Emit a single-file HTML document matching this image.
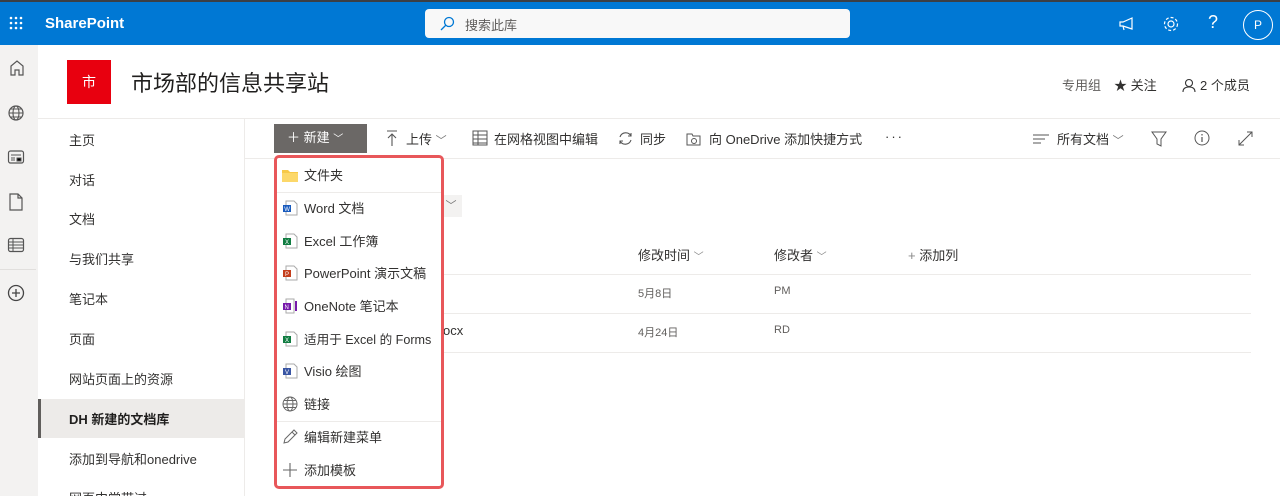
<!DOCTYPE html>
<html><head><meta charset="utf-8"><style>
*{box-sizing:border-box;margin:0;padding:0}
html,body{width:1280px;height:496px;overflow:hidden}
body{background:#fff;font-family:"Liberation Sans","Noto Sans CJK SC",sans-serif;color:#323130;position:relative}
.abs{position:absolute}
.top{left:0;top:0;width:1280px;height:45px;background:#0078d4;border-top:2px solid #3b3f45}
.rail{left:0;top:45px;width:38px;height:451px;background:#f3f2f1}
.nav a{position:absolute;left:69px;font-size:13px;color:#323130;text-decoration:none}
.cmd{font-size:13px;color:#323130;top:129px}
.mi{position:absolute;left:27px;font-size:13px;color:#323130;white-space:nowrap}
.ic{position:absolute;left:5px;width:16px;height:16px}
</style></head><body>
<div class="abs top">
  <svg class="abs" style="left:9px;top:14px" width="14" height="14"><g fill="#fff"><circle cx="2" cy="2" r="1.3"/><circle cx="7" cy="2" r="1.3"/><circle cx="12" cy="2" r="1.3"/><circle cx="2" cy="7" r="1.3"/><circle cx="7" cy="7" r="1.3"/><circle cx="12" cy="7" r="1.3"/><circle cx="2" cy="12" r="1.3"/><circle cx="7" cy="12" r="1.3"/><circle cx="12" cy="12" r="1.3"/></g></svg>
  <div class="abs" style="left:45px;top:13px;color:#fff;font-size:15px;font-weight:bold">SharePoint</div>
  <div class="abs" style="left:425px;top:7px;width:425px;height:29px;background:#f8f8f8;border-radius:4px">
    <svg class="abs" style="left:14px;top:7px" width="16" height="16"><circle cx="10" cy="6" r="4.5" fill="none" stroke="#0078d4" stroke-width="1.3"/><path d="M7 9L2 14" stroke="#0078d4" stroke-width="1.3"/></svg>
    <div class="abs" style="left:40px;top:6px;font-size:13px;color:#605e5c">搜索此库</div>
  </div>
  <svg class="abs" style="left:1118px;top:14px" width="18" height="16"><path d="M2 6h3l9-4v11l-9-3H2z M5 10l1 4" fill="none" stroke="#fff" stroke-width="1.2"/></svg>
  <svg class="abs" style="left:1162px;top:13px" width="18" height="18"><circle cx="9" cy="9" r="3" fill="none" stroke="#fff" stroke-width="1.2"/><circle cx="9" cy="9" r="6.5" fill="none" stroke="#fff" stroke-width="1.2" stroke-dasharray="3 2"/></svg>
  <div class="abs" style="left:1208px;top:10px;color:#fff;font-size:18px">?</div>
  <div class="abs" style="left:1243px;top:8px;width:30px;height:30px;border:1.3px solid #fff;border-radius:50%;color:#fff;font-size:12px;text-align:center;line-height:28px">P</div>
</div>
<div class="abs rail">
  <svg class="abs" style="left:8px;top:14px" width="18" height="18"><path d="M3 16V7l6-5 6 5v9h-4v-5H7v5z" fill="none" stroke="#555" stroke-width="1.2"/></svg>
  <svg class="abs" style="left:7px;top:59px" width="18" height="18"><circle cx="9" cy="9" r="7" fill="none" stroke="#555" stroke-width="1.2"/><ellipse cx="9" cy="9" rx="3" ry="7" fill="none" stroke="#555" stroke-width="1.1"/><path d="M2 9h14M3 5h12M3 13h12" stroke="#555" stroke-width="1"/></svg>
  <svg class="abs" style="left:7px;top:104px" width="18" height="16"><rect x="1.5" y="2" width="15" height="12" rx="2" fill="none" stroke="#555" stroke-width="1.2"/><path d="M4 6h10M4 9h4M4 11h4M10 9h4v3h-4z" stroke="#555" stroke-width="1"/></svg>
  <svg class="abs" style="left:9px;top:148px" width="14" height="18"><path d="M1 1h8l4 4v12H1z M9 1v4h4" fill="none" stroke="#555" stroke-width="1.2"/></svg>
  <svg class="abs" style="left:7px;top:192px" width="18" height="16"><rect x="1.5" y="1.5" width="15" height="13" rx="2" fill="none" stroke="#555" stroke-width="1.2"/><path d="M2 5h14M2 8h14M2 11h14M6 2v12" stroke="#555" stroke-width="1"/></svg>
  <div class="abs" style="left:0;top:224px;width:36px;height:1px;background:#e1dfdd"></div>
  <svg class="abs" style="left:6px;top:238px" width="20" height="20"><circle cx="10" cy="10" r="7.5" fill="none" stroke="#444" stroke-width="1.3"/><path d="M10 6v8M6 10h8" stroke="#444" stroke-width="1.3"/></svg>
</div>
<div class="abs" style="left:67px;top:60px;width:44px;height:44px;background:#e8000f;color:#fff;font-size:14px;text-align:center;line-height:44px">市</div>
<div class="abs" style="left:131px;top:66px;font-size:22px;color:#201f1e">市场部的信息共享站</div>
<div class="abs" style="left:1062px;top:75px;font-size:13px;color:#605e5c">专用组</div>
<div class="abs" style="left:1114px;top:75px;font-size:13px;color:#323130">★ 关注</div>
<svg class="abs" style="left:1182px;top:78px" width="14" height="15"><circle cx="7" cy="5" r="3.5" fill="none" stroke="#333" stroke-width="1.1"/><path d="M1 14c0-4 3-5 6-5s6 1 6 5" fill="none" stroke="#333" stroke-width="1.1"/></svg>
<div class="abs" style="left:1200px;top:75px;font-size:13px;color:#323130">2 个成员</div>
<div class="abs" style="left:38px;top:118px;width:1242px;height:1px;background:#edebe9"></div>
<div class="abs" style="left:244px;top:119px;width:1px;height:377px;background:#edebe9"></div>
<div class="abs" style="left:245px;top:158px;width:1035px;height:1px;background:#edebe9"></div>
<div class="nav">
  <a style="top:130px">主页</a><a style="top:170px">对话</a><a style="top:209px">文档</a><a style="top:249px">与我们共享</a><a style="top:289px">笔记本</a><a style="top:329px">页面</a><a style="top:369px">网站页面上的资源</a>
  <div class="abs" style="left:38px;top:399px;width:206px;height:39px;background:#edebe9;border-left:3px solid #605e5c"></div>
  <a style="top:409px;font-weight:bold;color:#201f1e">DH 新建的文档库</a>
  <a style="top:449px">添加到导航和onedrive</a><a style="top:488px">网页中常带过</a>
</div>
<div class="abs" style="left:274px;top:124px;width:93px;height:29px;background:#6b6866;color:#fff;font-size:13px;line-height:28px;padding-left:13px">＋ 新建 <span style="font-size:10px">﹀</span></div>
<svg class="abs" style="left:386px;top:130px" width="12" height="17"><path d="M1 1h10M6 4v12M2 8l4-4 4 4" fill="none" stroke="#555" stroke-width="1.1"/></svg>
<div class="abs cmd" style="left:406px">上传 <span style="color:#777;font-size:11px">﹀</span></div>
<svg class="abs" style="left:472px;top:130px" width="16" height="16"><rect x="1" y="1" width="14" height="14" fill="none" stroke="#555"/><path d="M1 5h14M1 9h14M1 13h14M6 1v14" stroke="#555"/></svg>
<div class="abs cmd" style="left:494px">在网格视图中编辑</div>
<svg class="abs" style="left:617px;top:130px" width="17" height="17"><path d="M3 7a6 6 0 0 1 11-1M14 10a6 6 0 0 1-11 1M14 3v3h-3M3 14v-3h3" fill="none" stroke="#555" stroke-width="1.1"/></svg>
<div class="abs cmd" style="left:640px">同步</div>
<svg class="abs" style="left:686px;top:131px" width="16" height="16"><path d="M1 3h5l1 2h7v9H1z" fill="none" stroke="#555"/><circle cx="8" cy="10" r="2.5" fill="none" stroke="#555"/></svg>
<div class="abs cmd" style="left:709px">向 OneDrive 添加快捷方式</div>
<div class="abs cmd" style="left:885px;letter-spacing:2px">···</div>
<svg class="abs" style="left:1033px;top:133px" width="16" height="12"><path d="M0 2h16M0 6h12M0 10h8" stroke="#555"/></svg>
<div class="abs cmd" style="left:1057px">所有文档 <span style="color:#777;font-size:11px">﹀</span></div>
<svg class="abs" style="left:1151px;top:131px" width="16" height="16"><path d="M1 1h14l-5 7v7l-4-2V8z" fill="none" stroke="#555"/></svg>
<svg class="abs" style="left:1194px;top:130px" width="16" height="16"><circle cx="8" cy="8" r="7" fill="none" stroke="#555"/><path d="M8 7v5M8 4v1.5" stroke="#555" stroke-width="1.2"/></svg>
<svg class="abs" style="left:1238px;top:131px" width="15" height="15"><path d="M1 14L14 1M9 1h5v5M1 9v5h5" fill="none" stroke="#555"/></svg>
<div class="abs" style="left:440px;top:195px;width:22px;height:22px;background:#f3f2f1;font-size:11px;color:#777;text-align:center;line-height:22px">﹀</div>
<div class="abs" style="left:638px;top:245px;font-size:13px">修改时间 <span style="color:#888;font-size:10px">﹀</span></div>
<div class="abs" style="left:774px;top:245px;font-size:13px">修改者 <span style="color:#888;font-size:10px">﹀</span></div>
<div class="abs" style="left:908px;top:245px;font-size:13px"><span style="color:#888">+</span> 添加列</div>
<div class="abs" style="left:440px;top:274px;width:811px;height:1px;background:#edebe9"></div>
<div class="abs" style="left:440px;top:313px;width:811px;height:1px;background:#edebe9"></div>
<div class="abs" style="left:440px;top:352px;width:811px;height:1px;background:#edebe9"></div>
<div class="abs" style="left:638px;top:285px;font-size:11px;color:#605e5c">5月8日</div>
<div class="abs" style="left:774px;top:285px;font-size:11px;color:#605e5c">PM</div>
<div class="abs" style="left:638px;top:324px;font-size:11px;color:#605e5c">4月24日</div>
<div class="abs" style="left:774px;top:324px;font-size:11px;color:#605e5c">RD</div>
<div class="abs" style="left:443px;top:323px;font-size:13px">ocx</div>
<div class="abs" style="left:274px;top:155px;width:170px;height:334px;background:#fff;border:3px solid #e8575a;border-radius:5px">
  <div class="ic" style="top:10px"><svg width="16" height="14"><path d="M0 2h6l2 2h8v10H0z" fill="#f7c948"/><path d="M0 5h16v9H0z" fill="#fcd86a"/></svg></div>
  <div class="mi" style="top:7px">文件夹</div>
  <div class="abs" style="left:0;top:34px;width:164px;height:1px;background:#edebe9"></div>
  <div class="ic" style="top:42px"><svg width="16" height="16"><path d="M4 1h8l3 3v11H4z" fill="#fff" stroke="#aaa"/><rect x="1" y="5" width="8" height="7" fill="#185abd"/><text x="2.3" y="11" font-size="6" fill="#fff" font-family="Liberation Sans">W</text></svg></div>
  <div class="mi" style="top:40px">Word 文档</div>
  <div class="ic" style="top:75px"><svg width="16" height="16"><path d="M4 1h8l3 3v11H4z" fill="#fff" stroke="#aaa"/><rect x="1" y="5" width="8" height="7" fill="#107c41"/><text x="3" y="11" font-size="6" fill="#fff" font-family="Liberation Sans">X</text></svg></div>
  <div class="mi" style="top:73px">Excel 工作簿</div>
  <div class="ic" style="top:107px"><svg width="16" height="16"><path d="M4 1h8l3 3v11H4z" fill="#fff" stroke="#aaa"/><rect x="1" y="5" width="8" height="7" fill="#c43e1c"/><text x="3" y="11" font-size="6" fill="#fff" font-family="Liberation Sans">P</text></svg></div>
  <div class="mi" style="top:105px">PowerPoint 演示文稿</div>
  <div class="ic" style="top:140px"><svg width="16" height="16"><path d="M4 1h8v14H4z" fill="#fff" stroke="#aaa"/><rect x="1" y="5" width="8" height="7" fill="#7719aa"/><rect x="13" y="3" width="2" height="10" fill="#7719aa"/><text x="2.5" y="11" font-size="6" fill="#fff" font-family="Liberation Sans">N</text></svg></div>
  <div class="mi" style="top:138px">OneNote 笔记本</div>
  <div class="ic" style="top:173px"><svg width="16" height="16"><path d="M4 1h8l3 3v11H4z" fill="#fff" stroke="#aaa"/><rect x="1" y="5" width="8" height="7" fill="#107c41"/><text x="3" y="11" font-size="6" fill="#fff" font-family="Liberation Sans">X</text></svg></div>
  <div class="mi" style="top:171px;font-size:12.6px">适用于 Excel 的 Forms</div>
  <div class="ic" style="top:205px"><svg width="16" height="16"><path d="M4 1h8l3 3v11H4z" fill="#fff" stroke="#aaa"/><rect x="1" y="5" width="8" height="7" fill="#3955a3"/><text x="3" y="11" font-size="6" fill="#fff" font-family="Liberation Sans">V</text></svg></div>
  <div class="mi" style="top:203px">Visio 绘图</div>
  <div class="ic" style="top:238px"><svg width="16" height="16"><circle cx="8" cy="8" r="7" fill="none" stroke="#666"/><ellipse cx="8" cy="8" rx="3" ry="7" fill="none" stroke="#666"/><path d="M1 8h14M2 4.5h12M2 11.5h12" stroke="#666"/></svg></div>
  <div class="mi" style="top:236px">链接</div>
  <div class="abs" style="left:0;top:263px;width:164px;height:1px;background:#edebe9"></div>
  <div class="ic" style="top:271px"><svg width="16" height="16"><path d="M2 14l1-4 9-9 3 3-9 9z M10 3l3 3" fill="none" stroke="#666"/></svg></div>
  <div class="mi" style="top:269px">编辑新建菜单</div>
  <div class="ic" style="top:304px"><svg width="16" height="16"><path d="M8 1v14M1 8h14" stroke="#666" stroke-width="1.1"/></svg></div>
  <div class="mi" style="top:302px">添加模板</div>
</div>
</body></html>
